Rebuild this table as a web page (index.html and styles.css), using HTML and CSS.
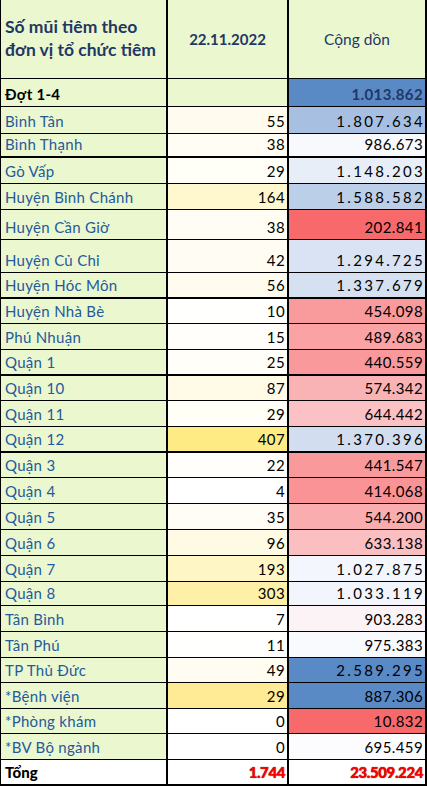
FILE: index.html
```html
<!DOCTYPE html>
<html lang="vi">
<head>
<meta charset="utf-8">
<title>Số mũi tiêm</title>
<link rel="stylesheet" href="styles.css">
</head>
<body>
<div class="sheet">
  <div class="c head name">Số mũi tiêm theo<br>đơn vị tổ chức tiêm</div>
  <div class="c head mid">22.11.2022</div>
  <div class="c head mid light">Cộng dồn</div>

  <div class="c n strong">Đợt 1-4</div>
  <div class="c v green"></div>
  <div class="c v navy strong" style="background:#5a8ac6">1.013.862</div>

  <div class="c n">Bình Tân</div>
  <div class="c v" style="background:#fffcef">55</div>
  <div class="c v w" style="background:#a7c0e1">1.807.634</div>

  <div class="c n thick">Bình Thạnh</div>
  <div class="c v thick" style="background:#fffdf4">38</div>
  <div class="c v thick" style="background:#f7f9fd">986.673</div>

  <div class="c n">Gò Vấp</div>
  <div class="c v" style="background:#fffef7">29</div>
  <div class="c v w" style="background:#e7eef8">1.148.203</div>

  <div class="c n">Huyện Bình Chánh</div>
  <div class="c v" style="background:#fff7ce">164</div>
  <div class="c v w" style="background:#bccfe9">1.588.582</div>

  <div class="c n">Huyện Cần Giờ</div>
  <div class="c v" style="background:#fffdf4">38</div>
  <div class="c v" style="background:#f8696b">202.841</div>

  <div class="c n">Huyện Củ Chi</div>
  <div class="c v" style="background:#fffdf3">42</div>
  <div class="c v w" style="background:#d9e3f3">1.294.725</div>

  <div class="c n thick">Huyện Hóc Môn</div>
  <div class="c v thick" style="background:#fffcef">56</div>
  <div class="c v w thick" style="background:#d5e0f1">1.337.679</div>

  <div class="c n">Huyện Nhà Bè</div>
  <div class="c v" style="background:#fffffd">10</div>
  <div class="c v" style="background:#f99b9d">454.098</div>

  <div class="c n">Phú Nhuận</div>
  <div class="c v" style="background:#fffefb">15</div>
  <div class="c v" style="background:#faa2a4">489.683</div>

  <div class="c n thick">Quận 1</div>
  <div class="c v thick" style="background:#fffef9">25</div>
  <div class="c v thick" style="background:#f9999b">440.559</div>

  <div class="c n">Quận 10</div>
  <div class="c v" style="background:#fffbe6">87</div>
  <div class="c v" style="background:#fab3b5">574.342</div>

  <div class="c n">Quận 11</div>
  <div class="c v" style="background:#fffef7">29</div>
  <div class="c v" style="background:#fbc1c4">644.442</div>

  <div class="c n thick">Quận 12</div>
  <div class="c v thick" style="background:#ffeb84">407</div>
  <div class="c v w thick" style="background:#d2def0">1.370.396</div>

  <div class="c n">Quận 3</div>
  <div class="c v" style="background:#fffefa">22</div>
  <div class="c v" style="background:#f9999b">441.547</div>

  <div class="c n">Quận 4</div>
  <div class="c v" style="background:#ffffff">4</div>
  <div class="c v" style="background:#f99395">414.068</div>

  <div class="c n">Quận 5</div>
  <div class="c v" style="background:#fffdf5">35</div>
  <div class="c v" style="background:#faadaf">544.200</div>

  <div class="c n">Quận 6</div>
  <div class="c v" style="background:#fffae3">96</div>
  <div class="c v" style="background:#fbbfc1">633.138</div>

  <div class="c n">Quận 7</div>
  <div class="c v" style="background:#fff6c5">193</div>
  <div class="c v w" style="background:#f3f6fc">1.027.875</div>

  <div class="c n">Quận 8</div>
  <div class="c v" style="background:#fff0a8">303</div>
  <div class="c v w" style="background:#f2f5fb">1.033.119</div>

  <div class="c n">Tân Bình</div>
  <div class="c v" style="background:#ffffff">7</div>
  <div class="c v" style="background:#fbf3f6">903.283</div>

  <div class="c n">Tân Phú</div>
  <div class="c v" style="background:#fffffd">11</div>
  <div class="c v" style="background:#f8fafe">975.383</div>

  <div class="c n">TP Thủ Đức</div>
  <div class="c v" style="background:#fffdf1">49</div>
  <div class="c v w" style="background:#5a8ac6">2.589.295</div>

  <div class="c n">*Bệnh viện</div>
  <div class="c v" style="background:#ffeb96">29</div>
  <div class="c v" style="background:#5a8ac6">887.306</div>

  <div class="c n">*Phòng khám</div>
  <div class="c v" style="background:#ffffff">0</div>
  <div class="c v" style="background:#f8696b">10.832</div>

  <div class="c n">*BV Bộ ngành</div>
  <div class="c v" style="background:#ffffff">0</div>
  <div class="c v" style="background:#fcfcff">695.459</div>

  <div class="c n total last">Tổng</div>
  <div class="c v red last">1.744</div>
  <div class="c v red last">23.509.224</div>
</div>
</body>
</html>
```

FILE: styles.css
```css
* { box-sizing: border-box; }
html, body { margin: 0; padding: 0; background: #ffffff; }
body { font-family: Lato, "Liberation Sans", sans-serif; font-size: 15px; color: #000; }

.sheet {
  display: grid;
  width: 426px;
  grid-template-columns: 167px 121px 138px;
  grid-template-rows: 79px 28px 27px 24px 26px 26px 30px 33px 26px 25px 26px 26px 25px 26px 26px 25px 26px 26px 26px 26px 24px 26px 26px 25px 26px 25px 26px 26px;
  border-left: 1px solid #000;
}

.c {
  display: flex;
  align-items: flex-end;
  border-right: 2px solid #000;
  border-bottom: 1px solid #000;
  padding: 0 2px 2px 4px;
  line-height: 19px;
  white-space: nowrap;
  overflow: hidden;
}
.c.thick { border-bottom-width: 2px; }
.c.last { border-bottom-width: 2px; background: #ffffff; }

.head {
  background: #ebf7cf;
  align-items: center;
  color: #1f3864;
  font-weight: 700;
  font-size: 15px;
}
.head.name { line-height: 23px; padding-left: 4px; font-size: 17.5px; }
.head.mid { justify-content: center; padding: 0; }
.head.light { font-weight: 400; font-size: 15.5px; }

.n { background: #ebf7cf; color: #235a9c; letter-spacing: 0.3px; }
.v { justify-content: flex-end; letter-spacing: 0.4px; }
.v.w { letter-spacing: 2.3px; padding-right: 0; }
.green { background: #ebf7cf; }
.strong { font-weight: 700; color: #000; }
.navy { color: #1f3864; }

.total { font-weight: 900; color: #000; letter-spacing: 0; }
.red { color: #ff0000; font-weight: 900; letter-spacing: -0.4px; text-shadow: 0 0 1px #600; }
```
